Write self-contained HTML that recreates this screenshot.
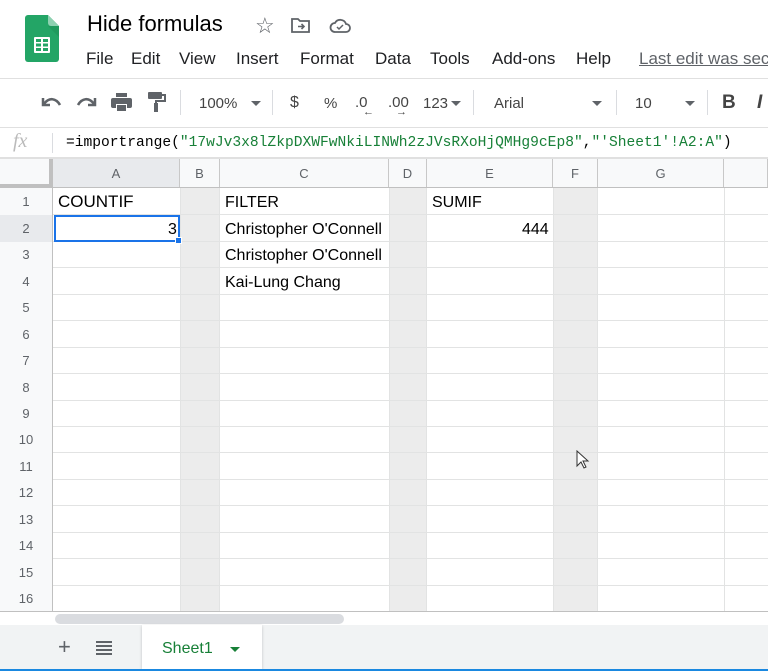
<!DOCTYPE html>
<html><head><meta charset="utf-8"><style>
*{margin:0;padding:0;box-sizing:border-box}
body{width:768px;height:671px;overflow:hidden;background:#fff;font-family:"Liberation Sans",Arial,sans-serif;position:relative;color:#202124}
.a{position:absolute}
.menu span{position:absolute;top:0}
.tb{color:#444;font-size:15px}
.rh{position:absolute;left:0;width:53px;text-align:center;font-size:13px;color:#5f6368;background:#f8f9fa;border-right:1px solid #c0c0c0}
.ch{position:absolute;top:159px;height:29px;line-height:29px;text-align:center;font-size:13px;color:#5f6368;background:#f8f9fa;border-right:1px solid #c8c8c8}
.hl{position:absolute;left:53px;right:0;height:1px;background:#e2e3e3}
.vl{position:absolute;top:188px;height:423px;width:1px;background:#e2e3e3}
.gc{position:absolute;top:188px;height:423px;background:#ececec}
.t{position:absolute;font-size:16px;color:#000;white-space:nowrap}
</style></head><body>
<svg class="a" style="left:25px;top:15px" width="34" height="47" viewBox="0 0 34 47">
<path d="M3 0H23L34 11V44a3 3 0 0 1-3 3H3a3 3 0 0 1-3-3V3a3 3 0 0 1 3-3z" fill="#23a566"/>
<path d="M23 0L34 11H26a3 3 0 0 1-3-3z" fill="#8ed1b1"/>
<path d="M23 11L34 22V11z" fill="#1c8f53" opacity=".5"/>
<g fill="#fff"><rect x="9" y="22" width="16" height="16" rx="1"/></g>
<g fill="#23a566"><rect x="11" y="24" width="5" height="3"/><rect x="18" y="24" width="5" height="3"/><rect x="11" y="28.5" width="5" height="3"/><rect x="18" y="28.5" width="5" height="3"/><rect x="11" y="33" width="5" height="3"/><rect x="18" y="33" width="5" height="3"/></g>
</svg>
<div class="a" style="left:87px;top:11px;font-size:22px;color:#000">Hide formulas</div>
<div class="a" style="left:255px;top:13px;font-size:22px;color:#5f6368">☆</div>
<svg class="a" style="left:291px;top:17px" width="20" height="16" viewBox="0 0 20 16"><path d="M1 2h6l2 2h9v11H1z" fill="none" stroke="#5f6368" stroke-width="1.8"/><path d="M7 9.5h6M10.5 7l2.5 2.5-2.5 2.5" fill="none" stroke="#5f6368" stroke-width="1.6"/></svg>
<svg class="a" style="left:329px;top:17px" width="22" height="16" viewBox="0 0 22 16"><path d="M6 15h11a4 4 0 0 0 0-8 6 6 0 0 0-11-1 4.5 4.5 0 0 0 0 9z" fill="none" stroke="#5f6368" stroke-width="1.8"/><path d="M8 10l2 2 4-4" fill="none" stroke="#5f6368" stroke-width="1.5"/></svg>
<div class="a menu" style="left:0;top:49px;width:768px;height:24px;overflow:hidden;font-size:17px;color:#202124;white-space:nowrap">
<span style="left:86px">File</span><span style="left:131px">Edit</span><span style="left:179px">View</span><span style="left:236px">Insert</span><span style="left:300px">Format</span><span style="left:375px">Data</span><span style="left:430px">Tools</span><span style="left:492px">Add-ons</span><span style="left:576px">Help</span><span style="left:639px;color:#5f6368;text-decoration:underline">Last edit was seconds ago</span></div>
<div class="a" style="left:0;top:78px;width:768px;height:1px;background:#e0e0e0"></div>
<svg class="a" style="left:40px;top:95px" width="22" height="14" viewBox="0 0 22 14"><path d="M3 3v7h7" fill="none" stroke="#5f6368" stroke-width="2.5"/><path d="M4 9C9 2 16 3 20 10" fill="none" stroke="#5f6368" stroke-width="2.6"/></svg>
<svg class="a" style="left:76px;top:95px" width="22" height="14" viewBox="0 0 22 14"><path d="M19 3v7h-7" fill="none" stroke="#5f6368" stroke-width="2.5"/><path d="M18 9C13 2 6 3 2 10" fill="none" stroke="#5f6368" stroke-width="2.6"/></svg>
<svg class="a" style="left:111px;top:92px" width="21" height="20" viewBox="0 0 21 20"><rect x="5" y="1" width="11" height="4" fill="#5f6368"/><rect x="0" y="6" width="21" height="10" rx="2" fill="#5f6368"/><rect x="5" y="12" width="11" height="7" fill="#fff"/><rect x="6" y="13" width="9" height="6" fill="#5f6368"/></svg>
<svg class="a" style="left:148px;top:92px" width="18" height="21" viewBox="0 0 18 21"><rect x="0" y="0" width="14" height="7" rx="1" fill="#5f6368"/><path d="M14 3h3v6H8v3" fill="none" stroke="#5f6368" stroke-width="2"/><rect x="6" y="11" width="4" height="9" fill="#5f6368"/></svg>
<div class="a" style="left:180px;top:90px;width:1px;height:25px;background:#dadce0"></div>
<div class="a tb" style="left:199px;top:95px">100%</div>
<div class="a" style="left:251px;top:101px;border:5px solid transparent;border-top-color:#5f6368"></div>
<div class="a" style="left:272px;top:90px;width:1px;height:25px;background:#dadce0"></div>
<div class="a tb" style="left:290px;top:94px;font-size:16px">$</div>
<div class="a tb" style="left:324px;top:95px">%</div>
<div class="a tb" style="left:355px;top:94px">.0</div>
<div class="a" style="left:363px;top:106px;font-size:11px;color:#444">←</div>
<div class="a tb" style="left:388px;top:94px">.00</div>
<div class="a" style="left:396px;top:106px;font-size:11px;color:#444">→</div>
<div class="a tb" style="left:423px;top:95px">123</div>
<div class="a" style="left:451px;top:101px;border:5px solid transparent;border-top-color:#5f6368"></div>
<div class="a" style="left:473px;top:90px;width:1px;height:25px;background:#dadce0"></div>
<div class="a tb" style="left:494px;top:95px">Arial</div>
<div class="a" style="left:592px;top:101px;border:5px solid transparent;border-top-color:#5f6368"></div>
<div class="a" style="left:616px;top:90px;width:1px;height:25px;background:#dadce0"></div>
<div class="a tb" style="left:635px;top:95px">10</div>
<div class="a" style="left:685px;top:101px;border:5px solid transparent;border-top-color:#5f6368"></div>
<div class="a" style="left:707px;top:90px;width:1px;height:25px;background:#dadce0"></div>
<div class="a" style="left:722px;top:92px;font-size:19px;font-weight:bold;color:#444">B</div>
<div class="a" style="left:757px;top:92px;font-size:19px;font-style:italic;font-weight:bold;color:#444">I</div>
<div class="a" style="left:0;top:127px;width:768px;height:1px;background:#e0e0e0"></div>
<div class="a" style="left:13px;top:130px;font-size:20px;font-style:italic;font-family:'Liberation Serif',serif;color:#bbb">fx</div>
<div class="a" style="left:52px;top:133px;width:1px;height:20px;background:#dadce0"></div>
<div class="a" style="left:66px;top:135px;font-family:'Liberation Mono',monospace;font-size:14.6px;color:#000;white-space:nowrap">=importrange(<span style="color:#188038">"17wJv3x8lZkpDXWFwNkiLINWh2zJVsRXoHjQMHg9cEp8"</span>,<span style="color:#188038">"'Sheet1'!A2:A"</span>)</div>
<div class="a" style="left:0;top:157px;width:768px;height:2px;background:#e0e0e0"></div>
<div class="ch" style="left:0;width:53px;background:#f8f9fa;border-right:4px solid #c0c0c0;border-bottom:4px solid #c0c0c0;height:29px"></div>
<div class="ch" style="left:53px;width:127px;background:#e8eaed">A</div>
<div class="ch" style="left:180px;width:40px">B</div>
<div class="ch" style="left:220px;width:169px">C</div>
<div class="ch" style="left:389px;width:38px">D</div>
<div class="ch" style="left:427px;width:126px">E</div>
<div class="ch" style="left:553px;width:45px">F</div>
<div class="ch" style="left:598px;width:126px">G</div>
<div class="ch" style="left:724px;width:44px"></div>
<div class="a" style="left:0;top:187px;width:768px;height:1px;background:#c0c0c0"></div>
<div class="gc" style="left:180px;width:40px"></div>
<div class="gc" style="left:389px;width:38px"></div>
<div class="gc" style="left:553px;width:45px"></div>
<div class="vl" style="left:180px"></div><div class="vl" style="left:219px"></div>
<div class="vl" style="left:389px"></div><div class="vl" style="left:426px"></div>
<div class="vl" style="left:553px"></div><div class="vl" style="left:597px"></div>
<div class="vl" style="left:724px"></div>
<div class="rh" style="top:188px;height:27px;line-height:27px">1</div>
<div class="rh" style="top:215px;height:27px;line-height:27px;background:#e8eaed">2</div>
<div class="rh" style="top:242px;height:26px;line-height:26px">3</div>
<div class="rh" style="top:268px;height:27px;line-height:27px">4</div>
<div class="rh" style="top:295px;height:26px;line-height:26px">5</div>
<div class="rh" style="top:321px;height:27px;line-height:27px">6</div>
<div class="rh" style="top:348px;height:26px;line-height:26px">7</div>
<div class="rh" style="top:374px;height:27px;line-height:27px">8</div>
<div class="rh" style="top:401px;height:26px;line-height:26px">9</div>
<div class="rh" style="top:427px;height:26px;line-height:26px">10</div>
<div class="rh" style="top:453px;height:27px;line-height:27px">11</div>
<div class="rh" style="top:480px;height:26px;line-height:26px">12</div>
<div class="rh" style="top:506px;height:27px;line-height:27px">13</div>
<div class="rh" style="top:533px;height:26px;line-height:26px">14</div>
<div class="rh" style="top:559px;height:27px;line-height:27px">15</div>
<div class="rh" style="top:586px;height:25px;line-height:25px">16</div>
<div class="hl" style="top:214px"></div><div class="hl" style="top:241px"></div><div class="hl" style="top:267px"></div>
<div class="hl" style="top:294px"></div><div class="hl" style="top:320px"></div><div class="hl" style="top:347px"></div>
<div class="hl" style="top:373px"></div><div class="hl" style="top:400px"></div><div class="hl" style="top:426px"></div>
<div class="hl" style="top:452px"></div><div class="hl" style="top:479px"></div><div class="hl" style="top:505px"></div>
<div class="hl" style="top:532px"></div><div class="hl" style="top:558px"></div><div class="hl" style="top:585px"></div>
<div class="a" style="left:0;top:611px;width:768px;height:1px;background:#c0c0c0"></div>
<div class="t" style="left:58px;top:192px;font-size:17px">COUNTIF</div>
<div class="t" style="left:225px;top:194px">FILTER</div>
<div class="t" style="left:432px;top:194px">SUMIF</div>
<div class="t" style="left:225px;top:221px">Christopher O'Connell</div>
<div class="t" style="left:225px;top:247px">Christopher O'Connell</div>
<div class="t" style="left:225px;top:274px">Kai-Lung Chang</div>
<div class="t" style="left:522px;top:221px">444</div>
<div class="t" style="left:168px;top:221px">3</div>
<div class="a" style="left:54px;top:215px;width:126px;height:27px;border:2px solid #1a73e8"></div>
<div class="a" style="left:175px;top:237px;width:7px;height:7px;background:#1a73e8;border:1px solid #fff"></div>
<svg class="a" style="left:576px;top:450px" width="14" height="20" viewBox="0 0 14 20"><path d="M1 1v15l4-4 3 6 2-1-3-6h5z" fill="#fff" stroke="#333" stroke-width="1"/></svg>
<div class="a" style="left:0;top:612px;width:768px;height:13px;background:#fff"></div>
<div class="a" style="left:55px;top:614px;width:289px;height:10px;border-radius:5px;background:#dadce0"></div>
<div class="a" style="left:0;top:625px;width:768px;height:44px;background:#f1f3f4"></div>
<div class="a" style="left:58px;top:634px;font-size:22px;color:#5f6368">+</div>
<svg class="a" style="left:96px;top:641px" width="16" height="14" viewBox="0 0 16 14"><g fill="#5f6368"><rect y="0" width="16" height="2"/><rect y="4" width="16" height="2"/><rect y="8" width="16" height="2"/><rect y="12" width="16" height="2"/></g></svg>
<div class="a" style="left:142px;top:625px;width:120px;height:44px;background:#fff;box-shadow:0 1px 3px rgba(0,0,0,.2)"></div>
<div class="a" style="left:162px;top:640px;font-size:16px;color:#188038">Sheet1</div>
<div class="a" style="left:230px;top:647px;border:5px solid transparent;border-top-color:#188038"></div>
<div class="a" style="left:0;top:669px;width:768px;height:2px;background:#1a88e0"></div>
</body></html>
